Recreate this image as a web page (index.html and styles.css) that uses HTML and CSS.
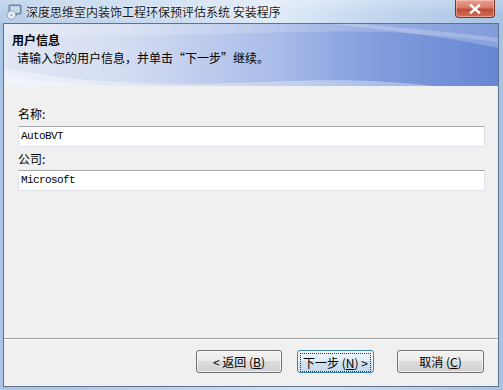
FILE: index.html
```html
<!DOCTYPE html>
<html lang="zh-CN">
<head>
<meta charset="utf-8">
<title>安装程序</title>
<link rel="stylesheet" href="styles.css">
</head>
<body>
<div class="window">
  <div class="titlebar">
    <svg class="app-icon" width="16" height="16" viewBox="0 0 16 16">
      <rect x="3" y="1" width="12" height="9" rx="1" fill="#8fa6c0" stroke="#52657e" stroke-width="0.8"/>
      <rect x="4.3" y="2.2" width="9.4" height="6.4" fill="#c9dcef"/>
      <rect x="7" y="10" width="4" height="2" fill="#7d8ea4"/>
      <circle cx="5.5" cy="11" r="4.3" fill="#e6ecf3" stroke="#7d8ea4" stroke-width="0.7"/>
      <circle cx="5.5" cy="11" r="1.2" fill="#9db0c6"/>
    </svg>
    <span class="title-text">深度思维室内装饰工程环保预评估系统 安装程序</span>
    <div class="close-btn">
      <svg width="12" height="10" viewBox="0 0 12 10"><path d="M2 1.5 L10 8.5 M10 1.5 L2 8.5" stroke="#fff" stroke-width="2.4" stroke-linecap="square"/></svg>
    </div>
  </div>
  <div class="client">
    <div class="banner">
      <svg class="banner-waves" width="495" height="62" viewBox="0 0 495 62" preserveAspectRatio="none">
        <path d="M0 0 H495 V18 C430 10 380 6 300 8 C200 10 120 14 0 10 Z" fill="#ffffff" opacity="0.18"/>
        <path d="M330 0 C400 8 450 14 495 24 V14 C450 8 400 4 360 0 Z" fill="#ffffff" opacity="0.22"/>
        <path d="M0 44 C80 60 160 62 260 58 C330 55 380 56 430 62 H0 Z" fill="#ffffff" opacity="0.35"/>
        <path d="M0 52 C90 66 200 62 300 62 H0 Z" fill="#ffffff" opacity="0.3"/>
      </svg>
      <div class="banner-title">用户信息</div>
      <div class="banner-sub">请输入您的用户信息，并单击“下一步”继续。</div>
    </div>
    <div class="content">
      <div class="field-label">名称:</div>
      <div class="text-input">AutoBVT</div>
      <div class="field-label second">公司:</div>
      <div class="text-input">Microsoft</div>
    </div>
    <div class="separator"></div>
    <div class="footer">
      <button class="btn btn-back">&lt; 返回 (<u>B</u>)</button>
      <button class="btn btn-next"><span class="focus-ring">下一步 (<u>N</u>) &gt;</span></button>
      <button class="btn btn-cancel">取消 (<u>C</u>)</button>
    </div>
  </div>
</div>
</body>
</html>
```
FILE: styles.css
```css
html, body {
  margin: 0;
  padding: 0;
}
body {
  width: 503px;
  height: 390px;
  overflow: hidden;
  font-family: "Noto Sans CJK SC", "Liberation Sans", sans-serif;
  font-size: 12px;
  color: #000;
}
.window {
  width: 503px;
  height: 390px;
  box-sizing: border-box;
  display: flex;
  flex-direction: column;
  background: linear-gradient(to right, #a9c4e4 0%, #bfd4ee 40%, #d3e3f5 60%, #a7c2e4 100%);
}
.titlebar {
  height: 23px;
  display: flex;
  align-items: center;
  padding-left: 6px;
  flex: none;
  background: linear-gradient(to bottom, rgba(255,255,255,0.25), rgba(255,255,255,0) 60%),
              linear-gradient(to right, #b7cde8 0%, #c9dbf0 35%, #e0ebf8 55%, #c1d6ee 75%, #a9c3e5 100%);
}
.app-icon {
  flex: none;
  margin-right: 4px;
}
.title-text {
  font-size: 12px;
  line-height: 16px;
  color: #1a1a1a;
  text-shadow: 0 0 6px rgba(255,255,255,0.9), 0 0 2px rgba(255,255,255,0.8);
  white-space: nowrap;
}
.close-btn {
  margin-left: auto;
  margin-right: 8px;
  align-self: flex-start;
  width: 40px;
  height: 18px;
  box-sizing: border-box;
  border: 1px solid #7a3328;
  border-top: none;
  border-radius: 0 0 4px 4px;
  background: linear-gradient(to bottom, #e8a394 0%, #d77a66 45%, #c24b34 55%, #d0705a 100%);
  box-shadow: inset 0 0 0 1px rgba(255,210,200,0.5);
  display: flex;
  align-items: center;
  justify-content: center;
}
.client {
  flex: 1;
  margin: 0 4px 3px 3px;
  border: 1px solid #5f7390;
  background: #f0f0f0;
  display: flex;
  flex-direction: column;
}
.banner {
  position: relative;
  height: 62px;
  flex: none;
  overflow: hidden;
  box-sizing: border-box;
  padding: 7px 0 0 8px;
  background: linear-gradient(to right, #e2e7f5 0%, #d3dcf1 25%, #a9bce9 55%, #819ddd 75%, #6787d2 100%);
}
.banner-waves {
  position: absolute;
  left: 0;
  top: 0;
  width: 100%;
  height: 100%;
}
.banner-title {
  position: relative;
  font-weight: bold;
  line-height: 17.5px;
}
.banner-sub {
  position: relative;
  line-height: 17.5px;
  padding-left: 5px;
}
.content {
  flex: 1;
  padding: 21px 13px 0 14px;
}
.field-label {
  line-height: 14px;
  margin-bottom: 5px;
}
.field-label.second {
  margin-top: 5px;
  margin-bottom: 4px;
}
.text-input {
  height: 21px;
  box-sizing: border-box;
  background: #fff;
  border: 1px solid #e2e3ea;
  border-top-color: #a8a8a8;
  font-family: "Liberation Mono", "DejaVu Sans Mono", monospace;
  font-size: 11px;
  letter-spacing: -0.6px;
  line-height: 19px;
  padding-left: 2px;
}
.separator {
  height: 1px;
  background: #a0a0a0;
  border-bottom: 1px solid #ffffff;
  flex: none;
}
.footer {
  display: flex;
  justify-content: flex-end;
  padding: 10px 14px 13px 0;
  flex: none;
}
.btn {
  height: 23px;
  box-sizing: border-box;
  border: 1px solid #707070;
  border-radius: 3px;
  background: linear-gradient(to bottom, #f3f3f3 0%, #ebebeb 49%, #dddddd 50%, #cfcfcf 100%);
  box-shadow: inset 0 0 0 1px rgba(255,255,255,0.7);
  font-family: "Noto Sans CJK SC", "Liberation Sans", sans-serif;
  font-size: 12px;
  line-height: 19px;
  color: #000;
  padding: 0;
  text-align: center;
  white-space: nowrap;
}
.btn u {
  text-decoration: underline;
}
.btn-back {
  width: 86px;
}
.btn-next {
  width: 77px;
  margin-left: 15px;
  border-color: #3c7fb1;
  background: linear-gradient(to bottom, #eef5fb 0%, #e2edf7 49%, #d2e3f2 50%, #c3d9ed 100%);
  padding: 2px;
}
.focus-ring {
  display: block;
  height: 17px;
  line-height: 17px;
  border: 1px dotted #333;
}
.btn-cancel {
  width: 87px;
  margin-left: 23px;
}
```
